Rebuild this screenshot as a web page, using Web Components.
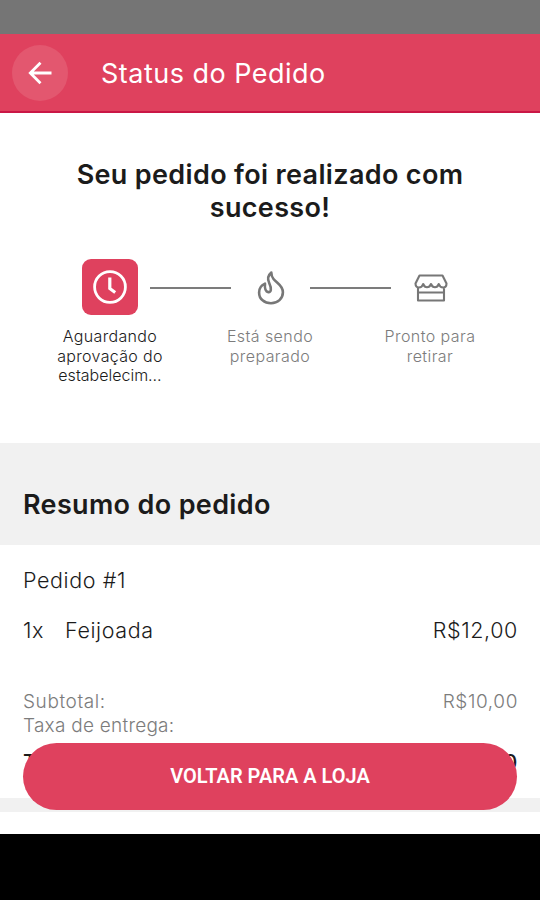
<!DOCTYPE html>
<html lang="pt-BR"><head><meta charset="utf-8"><title>Status do Pedido</title>
<style>html,body{margin:0;height:100%;overflow:hidden}body{font-family:Inter,Roboto,sans-serif;color:#1b1b1b;background:#fff}</style></head>
<body><order-page></order-page>
<script>
const define=(name,html)=>customElements.define(name,class extends HTMLElement{
  constructor(){super();this.attachShadow({mode:'open'}).innerHTML=html;}
});
define('app-header',`<style>
:host{display:flex;align-items:center;height:79px;box-sizing:border-box;background:#df415e;border-bottom:2px solid #ca1746;padding:1px 12px 0;color:#fff}
.back{width:56px;height:56px;border-radius:50%;background:#e3576f;display:flex;align-items:center;justify-content:center;margin-right:33px}
.title{font-size:27px;line-height:34px;letter-spacing:.48px;padding-top:1px}
</style><div class="back"><svg width="28" height="28" viewBox="0 0 28 28" fill="none" stroke="#fff" stroke-width="2.8"><path d="M25.5 14H4.5M14.5 3.8L4.3 14l10.2 10.2"/></svg></div><div class="title"><slot></slot></div>`);
define('order-step',`<style>
:host{display:flex;flex-direction:column;align-items:center;width:160px;color:#7c7c7c;font-size:16px;font-weight:300;line-height:19.5px;text-align:center;letter-spacing:.42px}
:host([active]){color:#1b1b1b;letter-spacing:.33px}
.icon{width:56px;height:56px;border-radius:9px;display:flex;align-items:center;justify-content:center;margin-bottom:12px}
:host([active]) .icon{background:#df415e}
:host(:not([active])) .icon{padding:2px 0 0 1px;box-sizing:border-box}
</style><div class="icon"><slot name="icon"></slot></div><div><slot></slot></div>`);
define('order-steps',`<style>
:host{display:grid;grid-template-columns:repeat(3,160px);justify-content:center;position:relative}
i{position:absolute;top:28px;width:81px;height:2px;background:#7c7c7c}
.a{left:150px}.b{left:310px}
</style><slot></slot><i class="a"></i><i class="b"></i>`);
define('section-title',`<style>
:host{display:block;box-sizing:border-box;height:102px;padding:45px 23px 0;background:#f1f1f1;font-size:27px;font-weight:600;line-height:34px;letter-spacing:.34px}
</style><slot></slot>`);
define('price-row',`<style>
:host{display:flex;justify-content:space-between;font-size:21.5px;font-weight:300;line-height:26px;letter-spacing:.6px}
:host([muted]){font-size:19px;line-height:24px;color:#7c7c7c;letter-spacing:.6px}
:host([narrow]){letter-spacing:.25px}
.p{margin-right:-1px}
</style><span><slot></slot></span><span class="p"><slot name="price"></slot></span>`);
define('pill-button',`<style>
:host{display:flex;align-items:center;justify-content:center;height:67px;box-sizing:border-box;padding-bottom:1px;border-radius:34px;background:#df415e;color:#fff;font:600 20px Roboto,sans-serif;letter-spacing:0}
</style><slot></slot>`);
define('order-page',`<style>
:host{display:flex;flex-direction:column;height:900px;width:540px;position:relative;overflow:hidden}
.status{height:34px;background:#757575}
.hero{height:330px;box-sizing:border-box;padding-top:45px}
h1{margin:0 0 35px;text-align:center;font-size:27px;line-height:33px;font-weight:600;letter-spacing:.34px}
.summary{height:253px;box-sizing:border-box;padding:22px 23px 0}
.item{margin:24px 0 47px}.qty{display:inline-block;width:42px}
.total{margin-top:11px}
.gap{height:14px;background:#f1f1f1}.end{height:22px}.nav{flex:1;background:#000}
pill-button{position:absolute;left:23px;right:23px;top:743px}
b{font-weight:500}
</style>
<div class="status"></div><app-header>Status do Pedido</app-header>
<div class="hero"><h1>Seu pedido foi realizado com<br>sucesso!</h1>
<order-steps>
<order-step active><svg slot="icon" width="36" height="36" viewBox="0 0 36 36" fill="none" stroke="#fff"><circle cx="18" cy="18" r="15.4" stroke-width="2.8"/><path stroke-width="3.2" d="M17.8 8.5V19.5L23.2 23.5"/></svg>Aguardando<br>aprovação do<br><span style="letter-spacing:0">estabelecim…</span></order-step>
<order-step><svg slot="icon" width="28" height="34" viewBox="0 0 28 34" fill="none" stroke="#777" stroke-width="2.6" stroke-linejoin="round"><path d="M14.3 1.5C10.6 4.6 10.4 8 12.2 12C14.8 17.5 14.2 21.6 11.3 21.1C8.2 20.5 7.6 16.5 8 12.6C4.2 14.3 2.1 17.6 2.1 21.4C2.1 28.2 7.4 32.2 14 32.2C20.8 32.2 25.9 27.6 25.9 21.3C25.9 14.4 20.2 12.7 16.5 8C14.8 5.8 14.3 3.9 14.3 1.5Z"/></svg>Está sendo<br>preparado</order-step>
<order-step><svg slot="icon" width="34" height="28" viewBox="0 0 34 28" fill="none" stroke="#777" stroke-width="2.1" stroke-linejoin="round"><path d="M5.5 1.5H28.5L32.5 9.5C32.5 12.2 31 13.5 29.2 13.5C27 13.5 25.5 12.2 24.8 10C24 12 22.8 13.2 21 13.2C19 13.2 17.8 12 17 10C16.2 12 15 13.2 13 13.2C11.2 13.2 10 12 9.2 10C8.5 12.2 7 13.5 4.8 13.5C3 13.5 1.5 12.2 1.5 9.5ZM4 13.5V26.5H30V13.5M4 18.5H30"/></svg>Pronto para<br>retirar</order-step>
</order-steps></div>
<section-title>Resumo do pedido</section-title>
<div class="summary">
<price-row>Pedido #1</price-row>
<price-row class="item"><span class="qty">1x</span>Feijoada<span slot="price">R$12,00</span></price-row>
<price-row muted>Subtotal:<span slot="price">R$10,00</span></price-row>
<price-row muted narrow>Taxa de entrega:</price-row>
<price-row class="total"><b>Total:</b><b slot="price">R$12,00</b></price-row>
</div><div class="gap"></div><div class="end"></div><div class="nav"></div>
<pill-button>VOLTAR PARA A LOJA</pill-button>`);
</script></body></html>
